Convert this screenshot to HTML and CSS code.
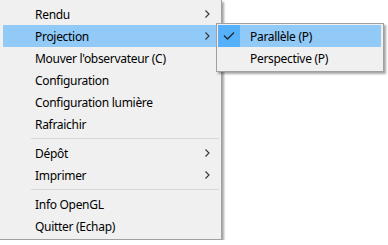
FILE: index.html
```html
<!DOCTYPE html>
<html lang="fr">
<head>
    <meta charset="UTF-8">
    <title>Menu</title>
    <link rel="stylesheet" href="styles.css">
</head>
<body>
    <div class="menu main-menu">
        <div class="item"><span class="label">Rendu</span><svg class="arrow" width="5" height="8" viewBox="0 0 5 8"><path d="M0.5 0.5 L4 4 L0.5 7.5" fill="none" stroke="#333" stroke-width="1.1"/></svg></div>
        <div class="item active"><span class="label">Projection</span><svg class="arrow" width="5" height="8" viewBox="0 0 5 8"><path d="M0.5 0.5 L4 4 L0.5 7.5" fill="none" stroke="#333" stroke-width="1.1"/></svg></div>
        <div class="item"><span class="label">Mouver l'observateur (C)</span></div>
        <div class="item"><span class="label">Configuration</span></div>
        <div class="item"><span class="label">Configuration lumière</span></div>
        <div class="item"><span class="label">Rafraichir</span></div>
        <div class="separator"></div>
        <div class="item"><span class="label">Dépôt</span><svg class="arrow" width="5" height="8" viewBox="0 0 5 8"><path d="M0.5 0.5 L4 4 L0.5 7.5" fill="none" stroke="#333" stroke-width="1.1"/></svg></div>
        <div class="item"><span class="label">Imprimer</span><svg class="arrow" width="5" height="8" viewBox="0 0 5 8"><path d="M0.5 0.5 L4 4 L0.5 7.5" fill="none" stroke="#333" stroke-width="1.1"/></svg></div>
        <div class="separator"></div>
        <div class="item"><span class="label">Info OpenGL</span></div>
        <div class="item"><span class="label">Quitter (Echap)</span></div>
    </div>

    <div class="menu sub-menu">
        <div class="item active">
            <span class="check"><svg width="12" height="9" viewBox="0 0 12 9"><path d="M1 3.5 L4.5 7 L11 0.5" fill="none" stroke="#1e2a36" stroke-width="1.3"/></svg></span>
            <span class="label">Parallèle (P)</span>
        </div>
        <div class="item"><span class="label">Perspective (P)</span></div>
    </div>
</body>
</html>
```

FILE: styles.css
```css
body, html {
    margin: 0;
    padding: 0;
    background-color: white;
    font-family: "Segoe UI", "Noto Sans", "Open Sans", sans-serif;
    font-size: 12px;
    letter-spacing: -0.3px;
    color: black;
}
.menu {
    background-color: #f0f0f0;
    border: 1px solid #a0a0a0;
    box-shadow: 2px 2px 2px rgba(0, 0, 0, 0.35);
}
.main-menu {
    width: 216px;
    border-top: none;
    border-left: none;
    padding: 3px 2px 2px 3px;
}
.sub-menu {
    position: absolute;
    left: 216px;
    top: 23px;
    width: 163px;
    padding: 1px 2px 2px 1px;
}
.item {
    position: relative;
    display: flex;
    align-items: center;
    height: 22px;
    line-height: 22px;
    padding-left: 32px;
    white-space: nowrap;
}
.item.active {
    background-color: #91c9f7;
}
.label {
    padding-top: 1px;
}
.arrow {
    position: absolute;
    left: 202px;
    top: 7px;
}
.check {
    position: absolute;
    left: 0;
    top: 0;
    width: 22px;
    height: 22px;
    background-color: #56b0fa;
    display: flex;
    align-items: center;
    justify-content: center;
}
.separator {
    height: 1px;
    margin: 3px 0 3px 28px;
    background-color: #d7d7d7;
}
```
